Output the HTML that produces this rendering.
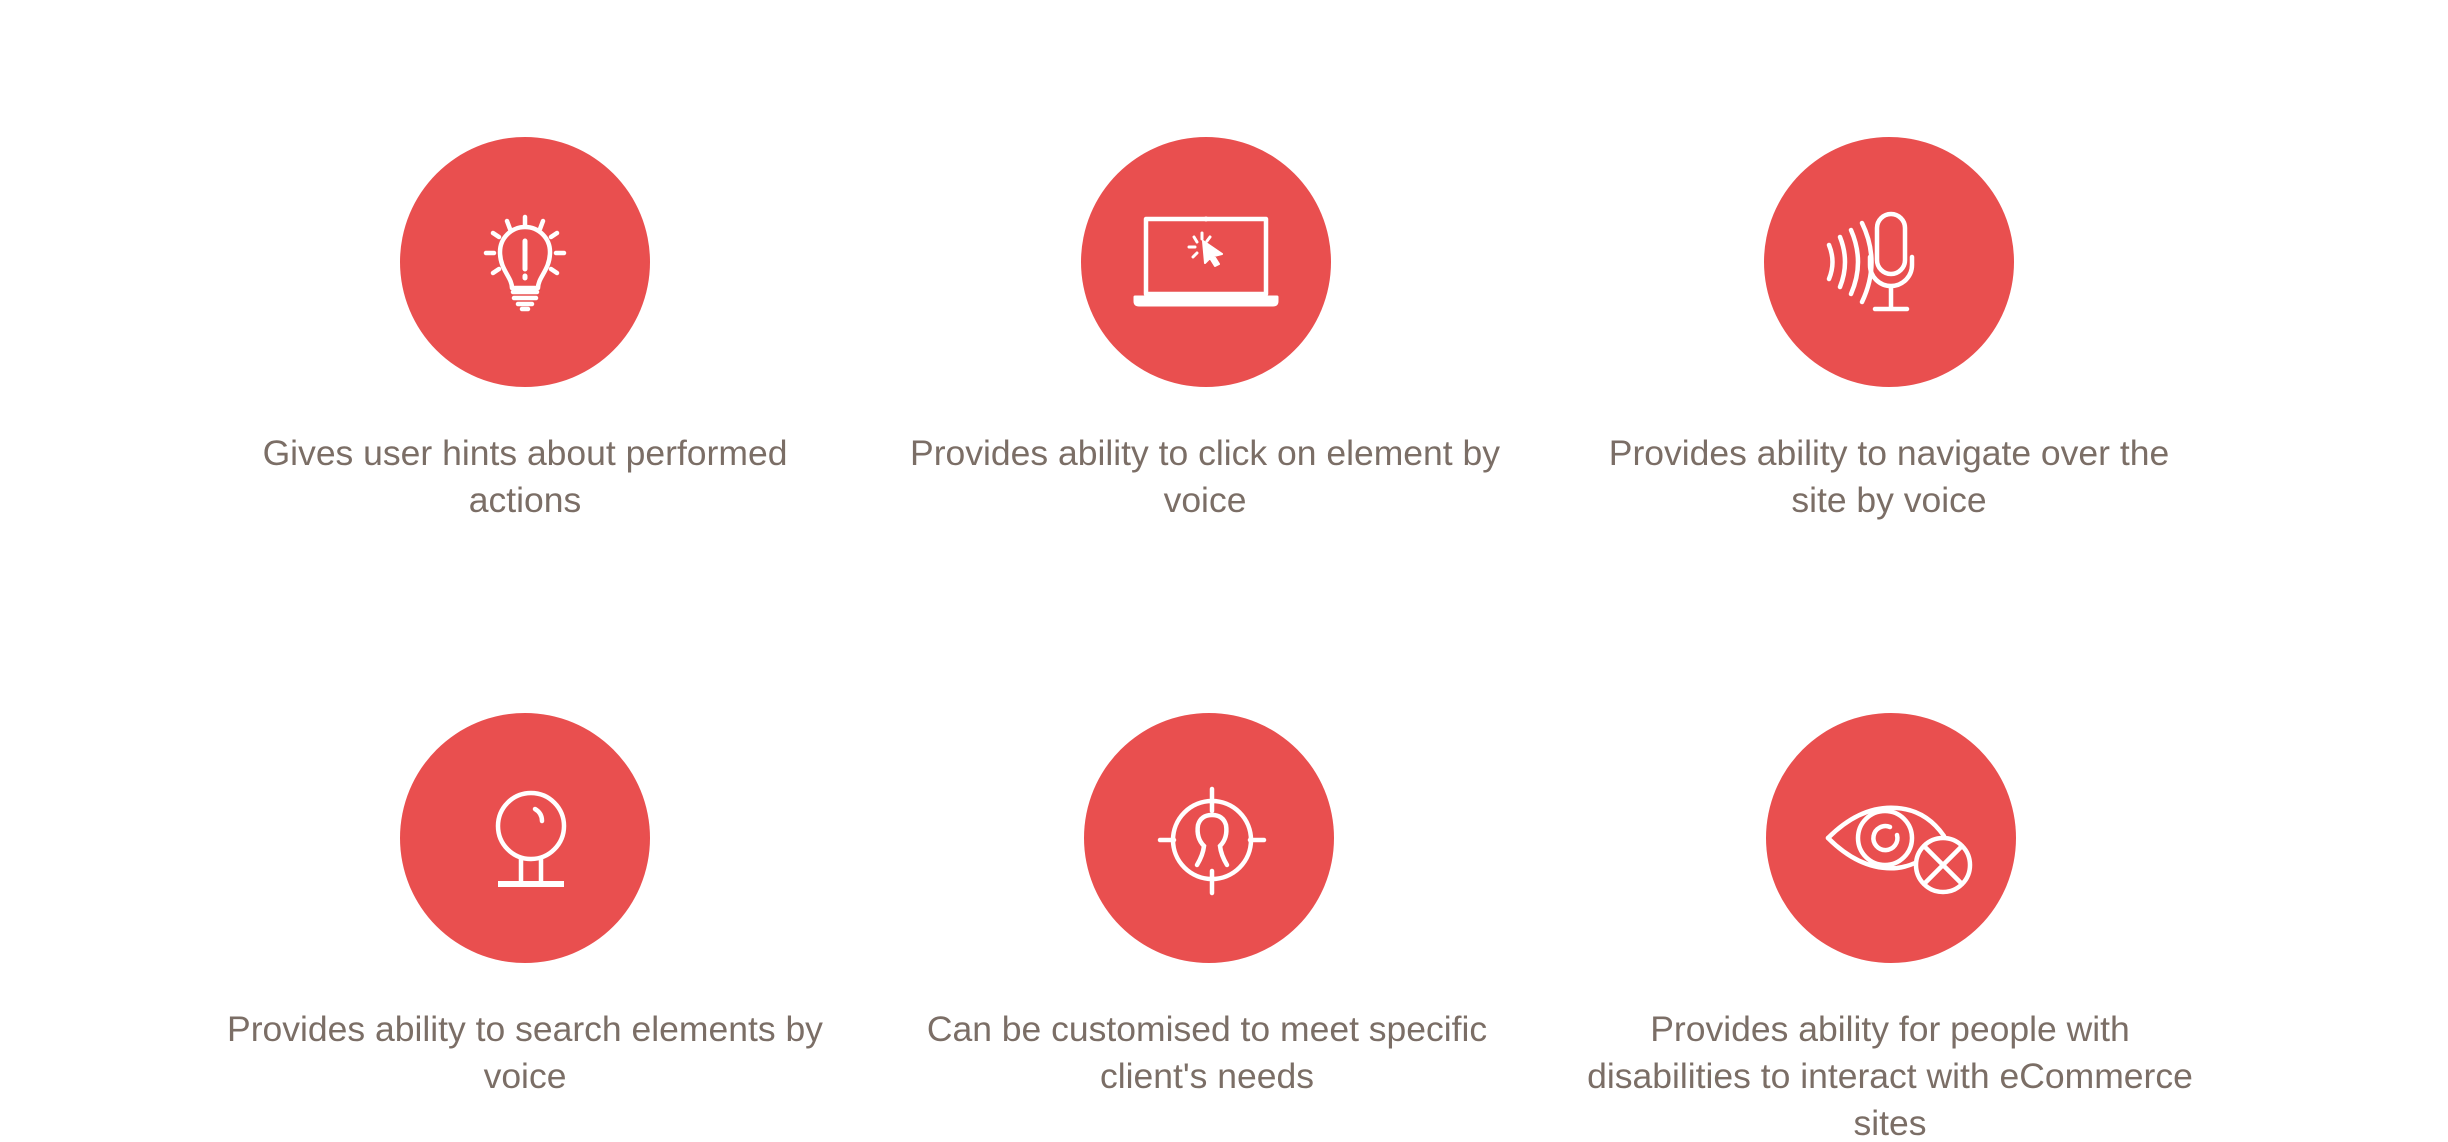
<!DOCTYPE html>
<html><head><meta charset="utf-8"><style>
html,body{margin:0;padding:0;background:#fff;width:2448px;height:1142px;overflow:hidden;position:relative;font-family:"Liberation Sans",Arial,sans-serif}
.c{position:absolute;width:250px;height:250px;border-radius:50%;background:#e94f4f}
.c svg{position:absolute;left:0;top:0}
.t{position:absolute;width:800px;margin-left:-400px;text-align:center;color:#7b6e66;font-size:35.5px;line-height:47px}
</style></head><body>

<div class="c" style="left:400px;top:137px"><svg width="250" height="250" fill="none" stroke="#fff" stroke-width="4.5" stroke-linecap="round" stroke-linejoin="round">
<path d="M112 151 C112 140 100 133 100 115 A25 25 0 0 1 150 115 C150 133 138 140 138 151 Z"/>
<path d="M113 155 H137 M114 161 H136 M118 167 H132 M122 172 H128"/>
<path d="M125 104 V132 M125 139 V141" stroke-width="5"/>
<path d="M125 80 V88 M107 84 L110 92 M143 84 L140 92 M93 96 L99 100 M157 96 L151 100 M86 116 H94 M156 116 H164 M93 136 L99 132 M157 136 L151 132"/>
</svg></div>

<div class="c" style="left:1081px;top:137px"><svg width="250" height="250" fill="none" stroke="#fff" stroke-width="4.5" stroke-linejoin="round">
<rect x="65" y="82" width="120" height="75"/>
<circle cx="125" cy="82" r="2.5" fill="#fff" stroke="none"/>
<path d="M54 160 H196 V164 Q196 168 192 168 H58 Q54 168 54 164 Z" fill="#fff" stroke-width="3"/>
<path d="M122 104 L141 117 L133 119 L138 127 L134 129 L129 121 L124 126 Z" fill="#fff" stroke-width="2"/>
<path d="M121 96 V102 M113 100 L116 105 M129 100 L126 104 M108 110 H114 M112 120 L116 116" stroke-width="3" stroke-linecap="round"/>
</svg></div>

<div class="c" style="left:1764px;top:137px"><svg width="250" height="250" fill="none" stroke="#fff" stroke-width="4.5" stroke-linecap="round">
<path d="M65 108 Q72 125 65 142"/>
<path d="M76 100 Q86 125 76 150"/>
<path d="M87 93 Q101 125 87 157"/>
<path d="M98 86 Q117 125 98 165"/>
<rect x="113" y="77" width="28" height="60" rx="14"/>
<path d="M106 120 V128 A21 21 0 0 0 148 128 V120"/>
<path d="M127 150 V170 M111 172 H143"/>
</svg></div>

<div class="c" style="left:400px;top:713px"><svg width="250" height="250" fill="none" stroke="#fff" stroke-width="4.5" stroke-linecap="round">
<circle cx="131" cy="113" r="33"/>
<path d="M135 96 Q142 100 142 108"/>
<path d="M121 146 V168 M141 146 V168"/>
<path d="M98 171 H164" stroke-width="6" stroke-linecap="butt"/>
</svg></div>

<div class="c" style="left:1084px;top:713px"><svg width="250" height="250" fill="none" stroke="#fff" stroke-width="4.5" stroke-linecap="round">
<circle cx="128" cy="127" r="39"/>
<path d="M128 76 V98 M128 158 V180 M76 127 H90 M166 127 H180"/>
<path d="M113 152 Q119 142 120 133 Q112 125 114 112 Q117 102 128 102 Q139 102 142 112 Q144 125 136 133 Q137 142 143 152"/>
</svg></div>

<div class="c" style="left:1766px;top:713px"><svg width="250" height="250" fill="none" stroke="#fff" stroke-width="4.5" stroke-linecap="round" stroke-linejoin="round">
<path d="M62 125 Q95 92 131 95 Q160 97 178 123"/>
<path d="M62 125 Q95 158 131 155 Q140 154 149 150"/>
<circle cx="119" cy="125" r="27"/>
<path d="M124 114 A12 12 0 1 0 131 122"/>
<circle cx="177" cy="152" r="27"/>
<path d="M158 133 L196 171 M196 133 L158 171"/>
</svg></div>

<div class="t" style="left:525px;top:430px">Gives user hints about performed<br>actions</div>
<div class="t" style="left:1205px;top:430px">Provides ability to click on element by<br>voice</div>
<div class="t" style="left:1889px;top:430px">Provides ability to navigate over the<br>site by voice</div>
<div class="t" style="left:525px;top:1006px">Provides ability to search elements by<br>voice</div>
<div class="t" style="left:1207px;top:1006px">Can be customised to meet specific<br>client's needs</div>
<div class="t" style="left:1890px;top:1006px">Provides ability for people with<br>disabilities to interact with eCommerce<br>sites</div>
</body></html>
